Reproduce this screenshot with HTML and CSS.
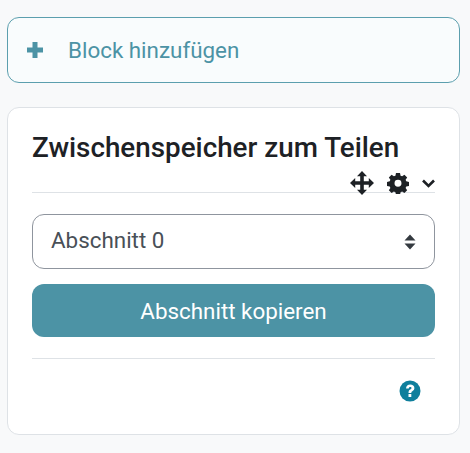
FILE: index.html
```html
<!DOCTYPE html>
<html lang="de">
<head>
    <meta charset="UTF-8">
    <meta name="viewport" content="width=device-width, initial-scale=1.0">
    <title>Zwischenspeicher zum Teilen</title>
    <link rel="stylesheet" href="styles.css">
</head>
<body>
    <a class="add-block" href="#">
        <svg class="add-icon" viewBox="0 0 18 18" width="18" height="18"><path d="M6.500 1h5v5.500H17v5h-5.500V17h-5v-5.500H1v-5h5.500z" fill="currentColor"/></svg>
        <span>Block hinzufügen</span>
    </a>

    <section class="card">
        <h2 class="card-title">Zwischenspeicher zum Teilen</h2>
        <div class="card-actions">
            <svg viewBox="0 0 24 24" width="24" height="24"><path d="M12 0l5 5.200h-3.200v5h5V7L24 12l-5.200 5v-3.200h-5v5H17L12 24l-5-5.200h3.200v-5h-5V17L0 12l5.200-5v3.200h5v-5H7z" fill="#1d2125"/></svg>
            <svg viewBox="0 0 24 24" width="22" height="22"><path fill-rule="evenodd" d="M9.800 1h4.400l.6 3 1.700.7L19 3l3 3-1.700 2.500.7 1.700 3 .6v4.400l-3 .6-.7 1.700L22 20l-3 3-2.500-1.700-1.700.7-.6 3H9.800l-.6-3-1.700-.7L5 23l-3-3 1.700-2.500-.7-1.700-3-.6v-4.400l3-.6.7-1.700L2 6l3-3 2.500 1.700 1.700-.7zM12 8.500a3.800 3.800 0 1 0 0 7.600 3.800 3.800 0 0 0 0-7.600z" fill="#1d2125"/></svg>
            <svg viewBox="0.500 -1 13 10" width="13" height="10"><path d="M1.500 1.500L7 7l5.500-5.500" fill="none" stroke="#1d2125" stroke-width="2.600"/></svg>
        </div>
        <div class="select">
            <span class="select-label">Abschnitt 0</span>
            <svg viewBox="0 0 12 18" width="12" height="18"><path d="M6 1.500l5.500 6H.5zM6 16.500l-5.500-6h11z" fill="#343a40"/></svg>
        </div>
        <button class="copy-button" type="button">Abschnitt kopieren</button>
        <div class="card-footer">
            <svg viewBox="0 0 22 22" width="22" height="22"><circle cx="11" cy="11" r="10.500" fill="#0f7f9c"/><path d="M7 8.600C7.200 6.200 8.800 4.600 11.200 4.600c2.500 0 4.200 1.500 4.200 3.500 0 1.600-.9 2.400-2 3.100-.8.500-1.100.9-1.100 1.800H9.500c0-1.800.5-2.600 1.700-3.400.9-.5 1.300-.9 1.300-1.500 0-.6-.5-1-1.300-1-.9 0-1.300.5-1.400 1.500zM9.500 14h2.800v3H9.500z" fill="#fff"/></svg>
        </div>
    </section>
</body>
</html>
```

FILE: styles.css
```css
body {
    font-family: Roboto, "Liberation Sans", sans-serif;
    background-color: #f8f9fa;
    margin: 0;
    padding: 17px 10px 18px 7px;
}

.add-block {
    display: flex;
    align-items: center;
    height: 66px;
    box-sizing: border-box;
    padding-left: 18px;
    border: 1px solid #5c9fae;
    border-radius: 12px;
    background-color: #f9fcfd;
    color: #4c93a5;
    font-size: 22.400px;
    text-decoration: none;
}

.add-icon {
    margin-right: 24px;
}

.card {
    position: relative;
    margin-top: 24px;
    height: 328px;
    box-sizing: border-box;
    padding: 24px 24px 0;
    border: 1px solid #dee2e6;
    border-radius: 12px;
    background-color: #ffffff;
    color: #1d2125;
}

.card-title {
    margin: 0;
    height: 60px;
    border-bottom: 1px solid #dee2e6;
    font-size: 27.800px;
    font-weight: 500;
    line-height: 32px;
}

.card-actions {
    position: absolute;
    top: 63px;
    right: 24px;
    display: flex;
    align-items: center;
    gap: 13px;
}

.select {
    display: flex;
    align-items: center;
    justify-content: space-between;
    height: 55px;
    box-sizing: border-box;
    margin-top: 21px;
    padding: 0 18px 0 18px;
    border: 1px solid #8f959e;
    border-radius: 12px;
    color: #495057;
    font-size: 22.400px;
}

.select-label {
    margin-bottom: 4px;
}

.copy-button {
    display: block;
    width: 100%;
    height: 53px;
    margin-top: 15px;
    border: none;
    border-radius: 12px;
    background-color: #4c93a5;
    color: #ffffff;
    font-family: inherit;
    font-size: 22.400px;
}

.card-footer {
    display: flex;
    justify-content: flex-end;
    height: 50px;
    margin-top: 21px;
    padding: 21px 14px 0 0;
    border-top: 1px solid #dee2e6;
}
```
